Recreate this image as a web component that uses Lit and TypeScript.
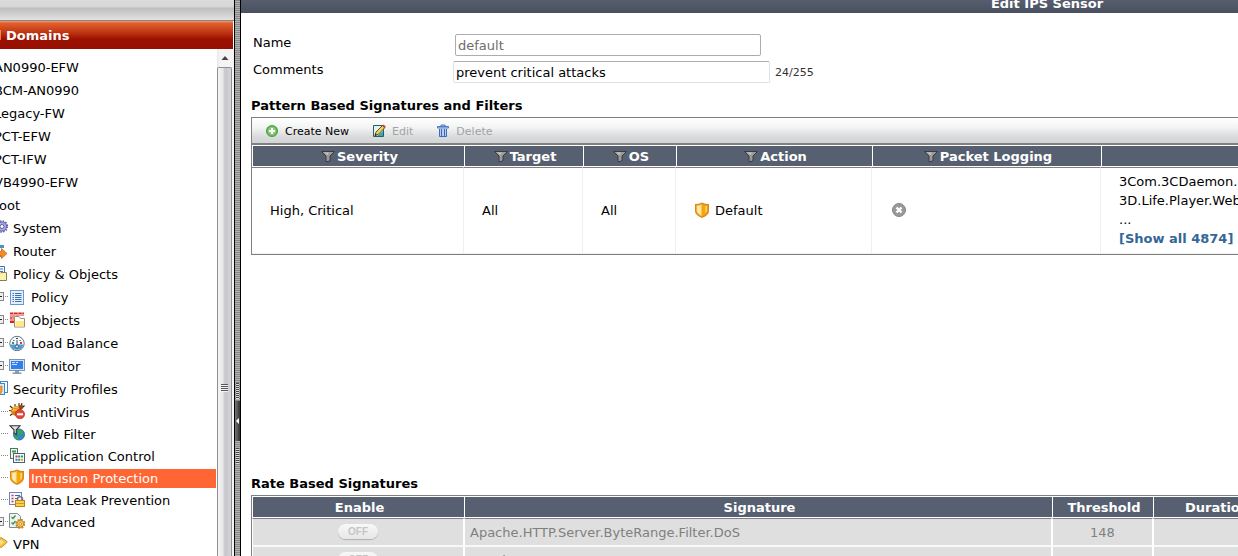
import { LitElement, html, css, svg } from "lit";
import { customElement } from "lit/decorators.js";
import { classMap } from "lit/directives/class-map.js";

const shield = svg`
  <path d="M1 2 Q5 2 8 .5 Q11 2 15 2 V9 Q15 13 8 16 Q1 13 1 9Z" fill="#d98a14"/>
  <path d="M2.3 3.2 Q5.5 3 8 1.9 V14.6 Q2.3 12 2.3 8.8Z" fill="#f8c65a"/>
  <path d="M8 1.9 Q10.500 3 13.700 3.200 V8.800 Q13.700 12 8 14.600Z" fill="#f0a21e"/>
  <path d="M3.300 4 Q5 3.900 6.800 3.300 V12.800 Q3.300 11 3.300 8.500Z" fill="#fdebb4"/>
  <path d="M8.600 3.400 Q10 3.900 11.500 4.100 V11.300 L8.600 13.300Z" fill="#f9a800"/>
  <path d="M11.500 4.100 H12.800 V8.800 Q12.800 10.200 11.500 11.300Z" fill="#ffe08a"/>`;

const icons: Record<string, unknown> = {
  gear: svg`
    <circle cx="10" cy="6.500" r="4.600" fill="#a9a9e0" stroke="#5c5ca5" stroke-width="1"/>
    <circle cx="10" cy="6.500" r="5.500" fill="none" stroke="#5c5ca5" stroke-width="1.500" stroke-dasharray="1.500 1.380"/>
    <circle cx="10" cy="6.500" r="2" fill="#fff" stroke="#5c5ca5"/>`,
  router: svg`
    <rect x="1" y="2" width="11" height="3" fill="#4a93c9"/><rect x="1" y="12" width="8" height="2" fill="#777"/>
    <path d="M2 8.500 H9.500 V5.500 L15 10.500 L9.500 15.500 V12.500 H2Z" fill="#f78a22" stroke="#c9681a" stroke-width=".8"/>`,
  policyObjects: svg`
    <path d="M4 .5 H12.500 V9 H4Z" fill="#fff" stroke="#3f72b8"/>
    <path d="M6 3 H11 M6 5.500 H11" stroke="#3f72b8"/>
    <path d="M1 7.500 H8 L9 6.500 H14.500 V14.500 H1Z" fill="#fdf3a8" stroke="#8a7c5a"/>`,
  policy: svg`
    <rect x="1.500" y="1.500" width="13" height="14" fill="#e3effb" stroke="#6a97d6"/>
    <path d="M3.500 4.500 H5 M6 4.500 H12.500 M3.500 6.500 H5 M6 6.500 H12.500 M3.500 8.500 H5 M6 8.500 H12.500 M3.500 10.500 H5 M6 10.500 H12.500 M3.500 12.500 H5 M6 12.500 H12.500" stroke="#3d6fb5"/>`,
  objects: svg`
    <path d="M1 .5 H15 V3.500 H1Z M1 4.500 H7 V7.500 H1Z M1 8.500 H5 V11 H1Z" fill="#d8261c"/>
    <path d="M1 2.500 H15 M1 6 H6 M4.500 0 V2 M9 0 V2 M13 0 V2 M6.500 3 V4 M11 3 V4 M4 4.500 V7.500" stroke="#fbd9cf" stroke-width=".7"/>
    <path d="M5.500 7 V4.500 H10 L11.500 6.500 H15.500 V15 H5.500Z" fill="#fff" stroke="#a98a72"/>
    <rect x="6.500" y="9" width="8.500" height="5.500" fill="#fbe98a"/>`,
  gauge: svg`
    <circle cx="8" cy="8.500" r="7.200" fill="#f8fafc" stroke="#5f7286"/>
    <path d="M1.600 9.500 H14.400 A6.500 6.500 0 0 1 1.600 9.500" fill="#4c9be0"/>
    <path d="M8 5 V12" stroke="#36506e" stroke-width="1"/><circle cx="8" cy="11.500" r="1.600" fill="#dceaf8" stroke="#36506e" stroke-width=".8"/>
    <path d="M7 3.500 H9" stroke="#345"/><path d="M4 5.500 H5.500 M10.500 5.500 H12" stroke="#377cc2" stroke-width="1.200"/>
    <path d="M3 8 H5" stroke="#2d9b39" stroke-width="2"/><path d="M11 8 H13" stroke="#e23b24" stroke-width="2"/>`,
  monitor: svg`
    <rect x=".5" y="1.500" width="15" height="11" fill="#d9e2ee" stroke="#8193ab"/>
    <rect x="2" y="3" width="12" height="8" fill="#2f7ff0"/>
    <path d="M3 4.500 H6 M7 4.500 H9 M3 6.500 H8" stroke="#cfe2fb"/>
    <path d="M6 13 H10 V14.500 H12.500 V16 H3.500 V14.500 H6Z" fill="#8d9aac"/>`,
  profiles: svg`
    <rect x="8.500" y=".5" width="7" height="11" fill="#fff" stroke="#3f86d0"/>
    <rect x="5.500" y="2.500" width="7" height="11" fill="#dbeafa" stroke="#3f86d0"/>
    <path d="M2 6 Q6 6 10 5 V10 Q10 13 5 15Z" fill="#f0a42a" stroke="#b9770d" stroke-width=".7"/>`,
  virus: svg`
    <path d="M1 3 L4 5.500 M0 7.500 L3 8 M1 12.500 L4 10.500 M6 1 V4 M10 0 V3 M13 0 L12 4 M15.500 2.500 L13 5" stroke="#43250b" stroke-width="1.100"/>
    <ellipse cx="7.500" cy="8" rx="5.500" ry="5" fill="#d98116"/>
    <path d="M4 5 Q7 3.500 9.500 5.500 M3 8 Q6 6 8 7.500" stroke="#f9bd4c" stroke-width="1.500" fill="none"/>
    <circle cx="12" cy="4" r="2.200" fill="#8a4c10"/>
    <circle cx="11" cy="11.200" r="4.600" fill="#e2483a" stroke="#b32018" stroke-width=".6"/>
    <rect x="8" y="10.300" width="6" height="2" fill="#fff"/>`,
  webFilter: svg`
    <circle cx="10" cy="9.500" r="5.600" fill="#2f88c8" stroke="#245f97" stroke-width=".7"/>
    <path d="M8 5 Q12 4 14.500 7 L12 10 L9.500 9Z M6 10 L9 12 L9.500 15 Q6 14 5 11Z M12 12 L14 11 L12.500 14Z" fill="#39a845"/>
    <path d="M1 .8 H11 L7.300 4.800 V9.500 L5 8 V4.800Z" fill="#e3e3e3" stroke="#333" stroke-width="1.100"/>`,
  appControl: svg`
    <rect x="1.500" y="1.500" width="7" height="10" fill="#eef6ee" stroke="#56745f"/><path d="M3 4.500 H7" stroke="#2fa048" stroke-width="2"/>
    <rect x="4.500" y="6.500" width="11" height="9" fill="#f6f9fc" stroke="#4d5f74"/>
    <path d="M6.500 9.500 H8.500" stroke="#d92c20" stroke-width="2"/><path d="M9.200 9.500 H11.200 M6.500 12.800 H8.500" stroke="#2d78c9" stroke-width="2"/>
    <path d="M12 9.500 H14 M9.200 12.800 H11.200" stroke="#2b9c4b" stroke-width="2"/><path d="M12 12.800 H14" stroke="#e4a21a" stroke-width="2"/>`,
  shield,
  dataLeak: svg`
    <rect x=".5" y="1.500" width="12" height="12" fill="#f5f8ff" stroke="#6f83c4"/>
    <path d="M2.500 4.500 H4.500 M2.500 7.500 H4.500 M2.500 10.500 H4.500" stroke="#d23b34" stroke-width="1.500"/>
    <path d="M6 4.500 H11 M6 7.500 H8" stroke="#4862ac"/>
    <path d="M8.500 10 V8 Q8.500 5.800 11 5.800 Q13.500 5.800 13.500 8 V10" fill="none" stroke="#717780" stroke-width="1.500"/>
    <rect x="6.500" y="9.500" width="9" height="6" fill="#f9cf4d" stroke="#ba841a"/><path d="M7 12.500 H15" stroke="#d39a20"/>`,
  advanced: svg`
    <path d="M.5 .5 H8.500 L11.500 3.500 V14.500 H.5Z" fill="#eef4f4" stroke="#7d8d96"/>
    <path d="M2.500 4 L4 5.500 L6.500 2.500 M2.500 9.500 L4 11 L6.500 8" stroke="#38913f" stroke-width="1.300" fill="none"/>
    <circle cx="11.300" cy="10.800" r="4.200" fill="none" stroke="#c5861a" stroke-width="1.600" stroke-dasharray="2 1.300"/>
    <circle cx="11.300" cy="10.800" r="3.400" fill="#f8cf6a" stroke="#c5861a"/><circle cx="11.300" cy="10.800" r="1.300" fill="#fff" stroke="#c5861a"/>`,
  vpn: svg`
    <path d="M9 1.500 L14.500 5 Q15.500 6 14.500 7 L9 11.500 L2 7Z" fill="#f6c443" stroke="#c98d16"/>
    <path d="M8 4 L12 6 L8.500 9" fill="#fde79b"/>`,
};

const icon = (name: string) =>
  html`<svg class="icon" viewBox="0 0 16 16" aria-hidden="true">${icons[name]}</svg>`;

interface TreeItem {
  label: string;
  icon?: string;
  level: 0 | 1 | 2;
  expander?: boolean;
  compact?: boolean;
  current?: boolean;
}

const tree: TreeItem[] = [
  { label: "AN0990-EFW", level: 0 },
  { label: "BCM-AN0990", level: 0 },
  { label: "Legacy-FW", level: 0 },
  { label: "PCT-EFW", level: 0 },
  { label: "PCT-IFW", level: 0 },
  { label: "VB4990-EFW", level: 0 },
  { label: "root", level: 0 },
  { label: "System", icon: "gear", level: 1 },
  { label: "Router", icon: "router", level: 1 },
  { label: "Policy & Objects", icon: "policyObjects", level: 1 },
  { label: "Policy", icon: "policy", level: 2, expander: true },
  { label: "Objects", icon: "objects", level: 2, expander: true },
  { label: "Load Balance", icon: "gauge", level: 2, expander: true },
  { label: "Monitor", icon: "monitor", level: 2, expander: true },
  { label: "Security Profiles", icon: "profiles", level: 1 },
  { label: "AntiVirus", icon: "virus", level: 2, compact: true },
  { label: "Web Filter", icon: "webFilter", level: 2, compact: true },
  { label: "Application Control", icon: "appControl", level: 2, compact: true },
  { label: "Intrusion Protection", icon: "shield", level: 2, compact: true, current: true },
  { label: "Data Leak Prevention", icon: "dataLeak", level: 2, compact: true },
  { label: "Advanced", icon: "advanced", level: 2, compact: true, expander: true },
  { label: "VPN", icon: "vpn", level: 1 },
];

@customElement("nav-tree")
class NavTree extends LitElement {
  static styles = css`
    :host {
      display: flex;
      flex-direction: column;
      min-height: 0;
      overflow: hidden;
      background: #fff;
    }
    .strip {
      flex: none;
      height: 20px;
      background: linear-gradient(#dcdcdc 0, #d6d6d6 7px, #bdbdbd 8px, #e2e2e2 20px);
      border-bottom: 1px solid #848484;
    }
    .title {
      flex: none;
      height: 28px;
      margin: 0 1px 0 0;
      font-size: 13px;
      line-height: 29px;
      color: #fff;
      white-space: nowrap;
      background: linear-gradient(#f0a080 0, #e2602c 2px, #c63c18 10px, #9c1202 18px, #960f00 100%);
    }
    .title span {
      margin-left: -3px;
    }
    .body {
      flex: 1;
      display: flex;
      min-height: 0;
    }
    .list {
      flex: 1;
      min-width: 0;
      margin: 0 1px 0 -8px;
      padding: 7px 0 0;
      list-style: none;
    }
    .item {
      display: flex;
      align-items: center;
      height: 23px;
      color: #000;
      text-decoration: none;
      white-space: nowrap;
    }
    .compact {
      height: 22px;
    }
    .level2 {
      padding-left: 4px;
    }
    .icon {
      flex: none;
      width: 16px;
      height: 16px;
      margin: 0 3px 2px 0;
    }
    .level2 .icon {
      margin-right: 4px;
    }
    .label {
      flex: 1;
      padding-left: 2px;
      line-height: 19px;
    }
    .current .label {
      background: #ff6633;
      color: #fff;
    }
    .branch {
      flex: none;
      width: 13px;
      height: 9px;
      margin-bottom: 2px;
    }
    .scroll {
      flex: none;
      display: flex;
      flex-direction: column;
      width: 17px;
      background: linear-gradient(90deg, #e8e8e8, #f4f4f4 3px, #f4f4f4);
    }
    .arrow {
      height: 18px;
      display: block;
    }
    .thumb {
      flex: 1;
      display: flex;
      justify-content: center;
      margin-right: 2px;
      border: 1px solid #909090;
      border-bottom: 0;
      border-radius: 2px 2px 0 0;
      background: linear-gradient(90deg, #f6f6f6 0, #e6e6e8 5px, #c6c6ca 7px, #d6d6da 100%);
    }
    .grip {
      width: 7px;
      height: 8px;
      margin-top: 316px;
      background: repeating-linear-gradient(#555 0, #555 1px, #f4f4f4 1px, #f4f4f4 2px);
    }
  `;

  private branch(item: TreeItem) {
    return html`<svg class="branch" viewBox="0 0 13 9" aria-hidden="true">
      <path d=${item.expander ? "M9 4.500 H13" : "M5 4.500 H13"} stroke="#888" stroke-dasharray="1 1" />
      ${item.expander
        ? svg`<rect x=".5" y=".5" width="7" height="8" fill="#eee" stroke="#888"/><path d="M2 4.500 H6" stroke="#222"/>`
        : ""}
    </svg>`;
  }

  render() {
    return html`
      <div class="strip"></div>
      <h2 class="title"><span>l Domains</span></h2>
      <div class="body">
        <ul class="list">
          ${tree.map(
            (item) => html`<li>
              <a
                href="#"
                class=${classMap({
                  item: true,
                  [`level${item.level}`]: true,
                  compact: !!item.compact,
                  current: !!item.current,
                })}
                >${item.level === 2 ? this.branch(item) : ""}${item.icon ? icon(item.icon) : ""}<span
                  class="label"
                  >${item.label}</span
                ></a
              >
            </li>`
          )}
        </ul>
        <div class="scroll">
          <svg class="arrow" viewBox="0 0 17 18"><path d="M4.500 11 L8 7 L11.500 11Z" fill="#444" /></svg>
          <div class="thumb"><span class="grip"></span></div>
        </div>
      </div>
    `;
  }
}

const funnel = html`<svg class="funnel" viewBox="0 0 14 11" aria-hidden="true">
  <path d="M.5 .5 H13.500 L9 5 V9.500 L7 10.500 H5 V5Z" fill="#9a9a9a" stroke="#3b3b3b" />
  <path d="M3 1.500 H8 L6.500 4Z" fill="#c5c5c5" />
</svg>`;

@customElement("ips-sensor-form")
class IpsSensorForm extends LitElement {
  static styles = css`
    :host {
      display: block;
      min-width: 0;
      overflow: hidden;
      background: #fff;
    }
    .page {
      min-width: 1612px;
    }
    .header {
      margin: -11px 0 0;
      padding-top: 5px;
      font-size: 13px;
      line-height: 19px;
      color: #fff;
      text-align: center;
      background: linear-gradient(#626a7a, #495060);
    }
    .content {
      padding: 21px 10px 0;
    }
    .form {
      display: grid;
      grid-template-columns: 200px 1fr;
      row-gap: 5px;
      padding-left: 2px;
      margin-bottom: 13px;
    }
    .form label {
      line-height: 17px;
    }
    .field {
      display: flex;
      align-items: center;
      gap: 5px;
      height: 22px;
    }
    .input {
      box-sizing: border-box;
      height: 22px;
      padding: 0 2px;
      font: inherit;
      color: #000;
      background: #fff;
      border: 1px solid #dde3ea;
      border-top-color: #abadb3;
      border-radius: 2px;
      width: 317px;
    }
    .input:disabled {
      width: 306px;
      margin-left: 2px;
      color: #6d6d6d;
      border-color: #adadad;
    }
    .count {
      font-size: 11px;
      color: #333;
    }
    .heading {
      margin: 0 0 2px;
      font-size: 13px;
      line-height: 19px;
    }
    .section {
      min-height: 357px;
    }
    .box {
      border: 1px solid #808080;
    }
    .toolbar {
      box-sizing: border-box;
      display: flex;
      align-items: center;
      gap: 23px;
      height: 27px;
      padding: 1px 0 0 13px;
      background: linear-gradient(#fff 0, #f2f3f3 40%, #d9dadb 75%, #d3d4d6);
      border-bottom: 2px solid #808080;
    }
    .tool {
      display: flex;
      align-items: center;
      gap: 6px;
      padding: 0;
      border: 0;
      background: none;
      font: inherit;
      font-size: 11px;
      color: #000;
    }
    .tool:disabled {
      color: #a3a3a3;
    }
    .tool svg {
      width: 14px;
      height: 14px;
    }
    .grid {
      width: 100%;
      table-layout: fixed;
      border-collapse: separate;
      border-spacing: 0;
    }
    .grid th {
      box-sizing: border-box;
      height: 22px;
      padding: 0;
      color: #fff;
      background: #576071;
      border: solid #fff;
      border-width: 1px 0 1px 1px;
    }
    .grid tbody tr:first-child td {
      border-top: 1px solid #808080;
    }
    .th {
      display: flex;
      align-items: center;
      justify-content: center;
      gap: 2px;
      height: 20px;
      padding-left: 2px;
      line-height: 19px;
    }
    .funnel {
      width: 14px;
      height: 11px;
    }
    .sensor td {
      box-sizing: border-box;
      height: 87px;
      padding: 0 0 1px 18px;
      border-right: 1px solid #efefef;
      border-bottom: 1px solid #efefef;
      white-space: nowrap;
      line-height: 19px;
    }
    .c1 {
      width: 212px;
    }
    .c2 {
      width: 119px;
    }
    .c3 {
      width: 93px;
    }
    .c4 {
      width: 196px;
    }
    .c5 {
      width: 229px;
    }
    .r2 {
      width: 588px;
    }
    .r3 {
      width: 101px;
    }
    .r4 {
      width: 125px;
    }
    .action {
      display: flex;
      align-items: center;
      gap: 5px;
    }
    .action svg {
      width: 16px;
      height: 16px;
    }
    .off-icon {
      display: block;
      width: 16px;
      height: 16px;
    }
    .link {
      color: #336699;
      font-weight: bold;
      text-decoration: none;
    }
    .rate td {
      box-sizing: border-box;
      height: 28px;
      padding: 0 0 0 5px;
      background: #dfdfdf;
      border-left: 1px solid #fff;
      border-right: 1px solid #fff;
      border-bottom: 2px solid #f4faf9;
      color: #808080;
    }
    .rate tbody tr:first-child td {
      height: 29px;
    }
    .rate td:first-child,
    .rate td:nth-child(n + 3) {
      padding: 0;
      text-align: center;
    }
    .switch {
      display: block;
      width: 40px;
      height: 15px;
      margin: 0 auto 2px;
      padding: 0;
      border: 0;
      border-radius: 8px;
      background: linear-gradient(#f8f8f8, #e6e6e6);
      box-shadow: 0 1px 1px #b0b0b0;
      color: #c4c4c4;
      font: bold 10px/15px "Liberation Sans", Arial, sans-serif;
    }
  `;

  private head(label: string, cls: string, filter = true) {
    return html`<th class=${cls} scope="col"><div class="th">${filter ? funnel : ""}<span>${label}</span></div></th>`;
  }

  private rateRow(name: string, threshold: string) {
    return html`<tr>
      <td><button class="switch" type="button" role="switch" aria-checked="false">OFF</button></td>
      <td>${name}</td>
      <td>${threshold}</td>
      <td></td>
      <td></td>
    </tr>`;
  }

  render() {
    return html`
      <div class="page">
        <h1 class="header">Edit IPS Sensor</h1>
        <div class="content">
          <form class="form">
            <label for="name">Name</label>
            <div class="field"><input class="input" id="name" value="default" disabled /></div>
            <label for="comments">Comments</label>
            <div class="field">
              <input class="input" id="comments" value="prevent critical attacks" maxlength="255" />
              <span class="count">24/255</span>
            </div>
          </form>

          <h2 class="heading">Pattern Based Signatures and Filters</h2>
          <div class="section">
            <div class="box">
              <div class="toolbar">
                <button class="tool" type="button">
                  <svg viewBox="0 0 14 14" aria-hidden="true">
                    <circle cx="7" cy="7" r="5.600" fill="#5fb04f" stroke="#3f9a3a" stroke-width=".8" />
                    <circle cx="7" cy="7" r="4.400" fill="#84c873" />
                    <path d="M7 4 V10 M4 7 H10" stroke="#fff" stroke-width="2.200" />
                  </svg>
                  Create New
                </button>
                <button class="tool" type="button" disabled>
                  <svg viewBox="0 0 14 14" aria-hidden="true">
                    <path d="M1.500 1.500 H11.500 V12.500 H1.500Z" fill="#e7f3f3" stroke="#23606a" />
                    <path d="M11 7 V12 H5Z" fill="#37a6ae" />
                    <path d="M3 11.500 L4 8 L10.500 1.500 L13 3.500 L6.500 10.200Z" fill="#f0d25a" stroke="#4c421c" stroke-width=".9" />
                    <path d="M10 2 L11.500 .5 L13.800 2.500 L12.500 4Z" fill="#c4493a" />
                    <path d="M2.500 12 L3.500 9.500 L5 11Z" fill="#222" />
                  </svg>
                  Edit
                </button>
                <button class="tool" type="button" disabled>
                  <svg viewBox="0 0 14 14" aria-hidden="true">
                    <path d="M5 2 V1 H9 V2 M1.500 2.500 H12.500 V4 H1.500Z" fill="#b9d0f3" stroke="#4f79c4" />
                    <path d="M3 5 H11 V13 H3Z" fill="#b4ccf3" />
                    <path d="M3.500 5 V12.500 H10.500 V5 M5.500 5 V13 M8.500 5 V13" fill="none" stroke="#3f6abb" />
                  </svg>
                  Delete
                </button>
              </div>
              <table class="grid sensor">
                <thead>
                  <tr>
                    ${this.head("Severity", "c1")} ${this.head("Target", "c2")} ${this.head("OS", "c3")}
                    ${this.head("Action", "c4")} ${this.head("Packet Logging", "c5")}
                    <th></th>
                  </tr>
                </thead>
                <tbody>
                  <tr>
                    <td>High, Critical</td>
                    <td>All</td>
                    <td>All</td>
                    <td>
                      <div class="action">
                        <svg viewBox="0 0 16 16" aria-hidden="true">${shield}</svg>
                        <span>Default</span>
                      </div>
                    </td>
                    <td>
                      <svg class="off-icon" viewBox="0 0 16 16" aria-label="Disabled">
                        <circle cx="9" cy="8" r="6.500" fill="#999" stroke="#858585" />
                        <path d="M6.500 5.500 L11.500 10.500 M11.500 5.500 L6.500 10.500" stroke="#fff" stroke-width="2.400" />
                      </svg>
                    </td>
                    <td>
                      3Com.3CDaemon.FTP<br />3D.Life.Player.Web<br />...<br /><a class="link" href="#"
                        >[Show all 4874]</a
                      >
                    </td>
                  </tr>
                </tbody>
              </table>
            </div>
          </div>

          <h2 class="heading">Rate Based Signatures</h2>
          <div class="box">
            <table class="grid rate">
              <thead>
                <tr>
                  ${this.head("Enable", "c1", false)} ${this.head("Signature", "r2", false)}
                  ${this.head("Threshold", "r3", false)} ${this.head("Duration", "r4", false)}
                  <th></th>
                </tr>
              </thead>
              <tbody>
                ${this.rateRow("Apache.HTTP.Server.ByteRange.Filter.DoS", "148")} ${this.rateRow("Apache", "")}
              </tbody>
            </table>
          </div>
        </div>
      </div>
    `;
  }
}

@customElement("app-root")
class AppRoot extends LitElement {
  static styles = css`
    :host {
      display: grid;
      grid-template-columns: 234px 7px minmax(0, 1fr);
      grid-template-rows: minmax(0, 1fr);
      height: 100vh;
      overflow: hidden;
      font: 13px "DejaVu Sans", Verdana, sans-serif;
      color: #000;
    }
    .splitter {
      display: flex;
      flex-direction: column;
      align-items: center;
      padding: 383px 0 0;
      border: solid #000;
      border-width: 0 1px;
      background: repeating-linear-gradient(#888 0, #888 1px, #b2b2b2 1px, #b2b2b2 2px);
    }
    .dots {
      width: 3px;
      height: 16px;
      background: repeating-linear-gradient(#444 0, #444 1px, #ddd 1px, #ddd 2px);
    }
    .handle {
      width: 5px;
      height: 40px;
      margin: 2px 0 7px;
      padding: 0;
      border: 0;
      background: linear-gradient(90deg, #777, #333);
    }
    .handle svg {
      display: block;
      width: 5px;
      height: 8px;
      margin: auto;
    }
  `;

  render() {
    return html`
      <nav-tree></nav-tree>
      <div class="splitter">
        <span class="dots"></span>
        <button class="handle" type="button" aria-label="Collapse menu">
          <svg viewBox="0 0 5 8"><path d="M4 1 V7 L1 4Z" fill="#fff" /></svg>
        </button>
        <span class="dots"></span>
      </div>
      <ips-sensor-form></ips-sensor-form>
    `;
  }
}
